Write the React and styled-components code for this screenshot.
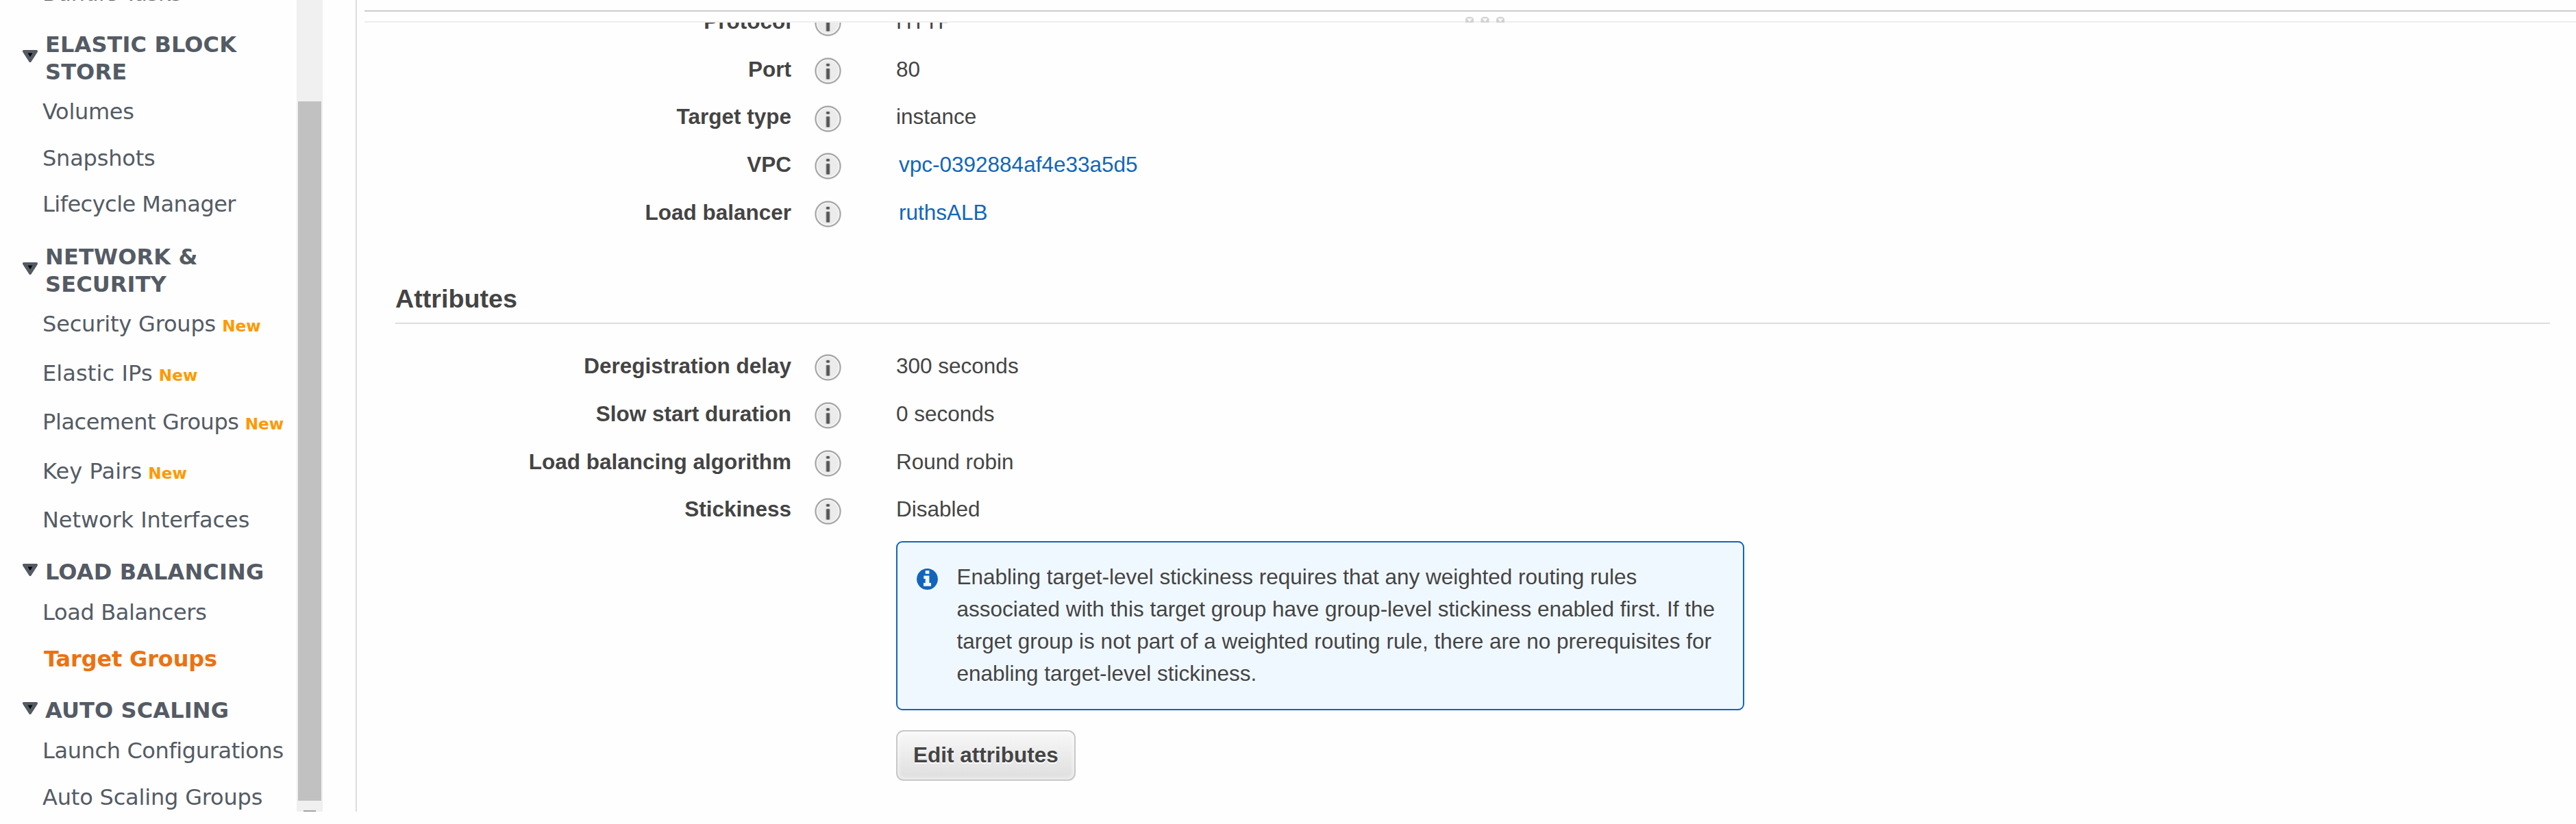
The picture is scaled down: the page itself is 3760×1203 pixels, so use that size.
import React from "react";
import styled, { createGlobalStyle } from "styled-components";

const GlobalStyle = createGlobalStyle`
  * { box-sizing: border-box; }
  body { margin: 0; background: #fefefe; }
`;

const Page = styled.div`
  display: flex;
  width: 3760px;
  height: 1203px;
  padding-bottom: 18px;
  overflow: hidden;
  background: #fefefe;
  color: #444;
  font-family: "Liberation Sans", Arial, sans-serif;
  font-size: 31.5px;
`;

/* Sidebar */

const Sidebar = styled.nav`
  display: grid;
  flex: none;
  grid-template-rows: 45px 310px 460px 202px 1fr;
  width: 433px;
  overflow: hidden;
  color: #545b64;
  font-family: "DejaVu Sans", Verdana, sans-serif;
  font-size: 32px;
  white-space: nowrap;
`;

const Group = styled.div`
  display: flex;
  flex-direction: column;
  justify-content: ${(p) => (p.$end ? "flex-end" : "flex-start")};
  min-height: 0;
`;

const GroupTitle = styled.div`
  display: flex;
  flex: none;
  align-items: center;
  gap: 11px;
  padding-left: 33px;
  line-height: 40px;
  letter-spacing: 0.12px;
  font-weight: 700;
`;

const Caret = styled.svg`
  flex: none;
  width: 22px;
  height: 18px;
  margin-bottom: 6px;
`;

const List = styled.div`
  padding-top: ${(p) => p.$top}px;
`;

const Item = styled.div`
  height: ${(p) => p.$height}px;
  padding-left: ${(p) => (p.$active ? 64 : 62)}px;
  line-height: ${(p) => p.$height}px;
  letter-spacing: ${(p) => p.$spacing || 0}px;
  font-weight: ${(p) => (p.$active ? 700 : 400)};
  color: ${(p) => (p.$active ? "#ec7211" : "inherit")};
`;

const NewTag = styled.span`
  margin-left: 9px;
  color: #ff9900;
  font-size: 23.2px;
  font-weight: 700;
  letter-spacing: 0;
`;

const ClippedItem = styled(Item)`
  flex: none;
  margin-bottom: 21px;
`;

const ScrollTrack = styled.div`
  display: flex;
  flex: none;
  flex-direction: column;
  align-items: center;
  justify-content: space-between;
  width: 38px;
  padding-top: 148px;
  background: #f0f0f0;
`;

const ScrollThumb = styled.div`
  width: 34px;
  height: 1021px;
  background: #c1c1c1;
`;

const ScrollArrow = styled.div`
  width: 18px;
  height: 2px;
  background: #a3a3a3;
`;

/* Main pane */

const Main = styled.main`
  display: flex;
  flex: 1;
  flex-direction: column;
  min-width: 0;
  margin-left: 48px;
  border-left: 2px solid #ddd;
`;

const Splitter = styled.div`
  position: relative;
  flex: none;
  height: 18px;
  margin: 15px 0 0 11px;
  border-top: 2px solid #ccc;
  border-bottom: 2px solid #eee;
`;

const Grip = styled.svg`
  position: absolute;
  top: 7px;
  left: 1607px;
  width: 60px;
  height: 9px;
`;

const Details = styled.div`
  flex: 1;
  min-height: 0;
  padding: 0 38px 0 56px;
  overflow: hidden;
`;

const Fields = styled.div`
  margin-top: ${(p) => p.$top}px;
`;

const Row = styled.div`
  display: grid;
  grid-template-columns: 578px 39px 1fr;
  column-gap: 34px;
  align-items: center;
  height: 69.7px;
  line-height: 69.7px;
  white-space: nowrap;
`;

const Label = styled.div`
  text-align: right;
  font-weight: 700;
`;

const Value = styled.div`
  padding-left: 46px;
`;

const Link = styled.a`
  padding-left: 4px;
  color: #1166bb;
`;

const HelpIcon = styled.svg`
  width: 39px;
  height: 39px;
  margin-top: 4px;
`;

const SectionTitle = styled.h2`
  margin: 60.3px 0 0;
  padding-bottom: 5px;
  border-bottom: 2px solid #ddd;
  font-size: 37.7px;
  line-height: 60px;
`;

const Indented = styled.div`
  padding: 11px 0 0 731px;
`;

const Callout = styled.div`
  display: flex;
  gap: 27.5px;
  width: 1238px;
  height: 247px;
  padding: 27.5px 28px;
  border: 2px solid #1166bb;
  border-radius: 9px;
  background: #f0f8ff;
  line-height: 47px;
  white-space: nowrap;
`;

const InfoIcon = styled.svg`
  flex: none;
  width: 31px;
  height: 31px;
  margin-top: 10.5px;
`;

const Button = styled.button`
  display: block;
  width: 262px;
  height: 74px;
  margin-top: 29px;
  padding: 0;
  border: 2px solid #c8c8c8;
  border-radius: 11px;
  background: linear-gradient(#f8f8f8, #dedede);
  box-shadow: inset 0 0 6px 1px rgba(255, 255, 255, 0.75);
  color: #444;
  font: 700 31.5px "Liberation Sans", Arial, sans-serif;
  text-shadow: 0 2px 0 #fff;
`;

const groups = [
  {
    title: ["ELASTIC BLOCK", "STORE"],
    top: 5,
    height: 67.7,
    items: [
      { text: "Volumes", spacing: -0.3 },
      { text: "Snapshots", spacing: -0.2 },
      { text: "Lifecycle Manager", spacing: -0.52 },
    ],
  },
  {
    title: ["NETWORK &", "SECURITY"],
    top: 3,
    height: 71.6,
    items: [
      { text: "Security Groups", isNew: true, spacing: -0.17 },
      { text: "Elastic IPs", isNew: true, spacing: 0.12 },
      { text: "Placement Groups", isNew: true, spacing: -0.4 },
      { text: "Key Pairs", isNew: true, spacing: 0.1 },
      { text: "Network Interfaces", spacing: -0.08 },
    ],
  },
  {
    title: ["LOAD BALANCING"],
    top: 5,
    height: 68,
    items: [
      { text: "Load Balancers", spacing: -0.35 },
      { text: "Target Groups", active: true, spacing: -0.15 },
    ],
  },
  {
    title: ["AUTO SCALING"],
    top: 5,
    height: 68,
    items: [
      { text: "Launch Configurations", spacing: -0.38 },
      { text: "Auto Scaling Groups", spacing: -0.18 },
    ],
  },
];

const basics = [
  ["Protocol", "HTTP"],
  ["Port", "80"],
  ["Target type", "instance"],
  ["VPC", "vpc-0392884af4e33a5d5", true],
  ["Load balancer", "ruthsALB", true],
];

const attributes = [
  ["Deregistration delay", "300 seconds"],
  ["Slow start duration", "0 seconds"],
  ["Load balancing algorithm", "Round robin"],
  ["Stickiness", "Disabled"],
];

function CaretDown() {
  return (
    <Caret viewBox="0 0 22 18">
      <path d="M2 2H20L11 16Z" fill="#000" stroke="#545b64" strokeWidth="4" strokeLinejoin="round" />
      <path d="M4 2.5H18L11 14Z" fill="none" stroke="#545b64" strokeWidth="4" />
    </Caret>
  );
}

function Help() {
  return (
    <HelpIcon viewBox="0 0 39 39">
      <circle cx="19.5" cy="19.5" r="18.3" fill="#f8f8f8" stroke="#cfcfcf" strokeWidth="2.4" />
      <circle cx="19.5" cy="19.5" r="17.9" fill="none" stroke="#a2a2a2" strokeWidth="1.6" />
      <circle cx="19.5" cy="19.5" r="15.4" fill="#ebebeb" />
      <rect x="16.4" y="8.4" width="6.2" height="4.6" rx="1.5" fill="#bbb" />
      <rect x="17.3" y="9" width="4.4" height="3.5" rx="1" fill="#555" />
      <rect x="16.2" y="15.4" width="6.6" height="16.6" rx="1.5" fill="#b4b4b4" />
      <rect x="17.4" y="16.2" width="4.3" height="15.2" rx="1" fill="#555" />
    </HelpIcon>
  );
}

function GripDots() {
  return (
    <Grip viewBox="0 0 60 9">
      {[0, 22.5, 45].map((x) => (
        <g key={x} transform={`translate(${x} 0)`}>
          <path d="M0 9V4Q1 0.5 6 0.5T12 4V9Z" fill="#d2d2d2" />
          <path d="M2 3H10L6 8Z" fill="#fafafa" />
        </g>
      ))}
    </Grip>
  );
}

function FieldRows({ rows, top }) {
  return (
    <Fields $top={top}>
      {rows.map(([label, value, link]) => (
        <Row key={label}>
          <Label>{label}</Label>
          <Help />
          <Value>{link ? <Link>{value}</Link> : value}</Value>
        </Row>
      ))}
    </Fields>
  );
}

export default function App() {
  return (
    <Page>
      <GlobalStyle />
      <Sidebar>
        <Group $end>
          <ClippedItem $height={68} $spacing={-0.3}>Bundle Tasks</ClippedItem>
        </Group>
        {groups.map((g) => (
          <Group key={g.title[0]}>
            <GroupTitle>
              <CaretDown />
              <div>
                {g.title.map((line) => (
                  <div key={line}>{line}</div>
                ))}
              </div>
            </GroupTitle>
            <List $top={g.top}>
              {g.items.map((i) => (
                <Item key={i.text} $height={g.height} $spacing={i.spacing} $active={i.active}>
                  {i.text}
                  {i.isNew && <NewTag>New</NewTag>}
                </Item>
              ))}
            </List>
          </Group>
        ))}
      </Sidebar>
      <ScrollTrack>
        <ScrollThumb />
        <ScrollArrow />
      </ScrollTrack>
      <Main>
        <Splitter>
          <GripDots />
        </Splitter>
        <Details>
          <FieldRows rows={basics} top={-36.1} />
          <SectionTitle>Attributes</SectionTitle>
          <FieldRows rows={attributes} top={27.5} />
          <Indented>
            <Callout>
              <InfoIcon viewBox="0 0 31 31">
                <circle cx="15.5" cy="15.5" r="15.4" fill="#1166bb" />
                <path
                  d="M12.7 3H18.4V7.8H12.7ZM10.3 10.4H18.4V21H21V25.8H10V21H12.7V15H10.3Z"
                  fill="#f0f8ff"
                />
              </InfoIcon>
              <div>
                Enabling target-level stickiness requires that any weighted routing rules
                <br />
                associated with this target group have group-level stickiness enabled first. If the
                <br />
                target group is not part of a weighted routing rule, there are no prerequisites for
                <br />
                enabling target-level stickiness.
              </div>
            </Callout>
            <Button>Edit attributes</Button>
          </Indented>
        </Details>
      </Main>
    </Page>
  );
}
